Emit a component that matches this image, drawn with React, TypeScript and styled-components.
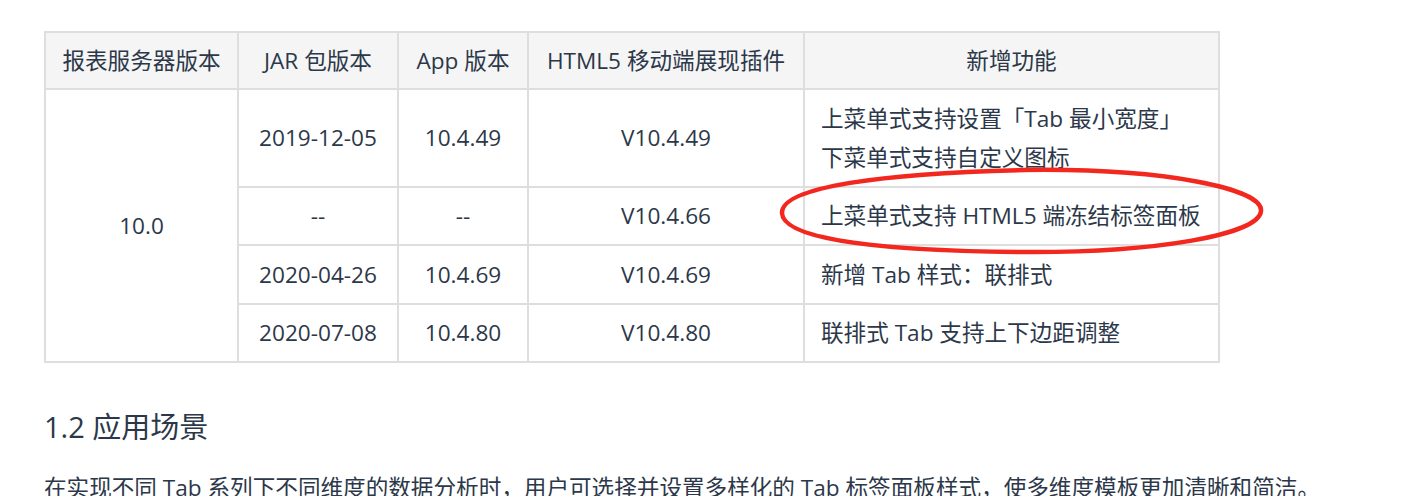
import React from "react"
import styled, { createGlobalStyle } from "styled-components"

const GlobalStyle = createGlobalStyle`
  html, body {
    margin: 0;
    padding: 0;
    background: #fff;
  }
  body {
    font-family: "Open Sans", "Noto Sans CJK SC", sans-serif;
    color: #2c3849;
  }
`

const Page = styled.div`
  padding: 31px 0 0 44px;
  width: 1368px;
  overflow: hidden;
`

const TableWrap = styled.div`
  position: relative;
  width: 1174px;
`

const Table = styled.table`
  border-collapse: collapse;
  table-layout: fixed;
  width: 1174px;
  font-size: 22.6px;
  line-height: 39px;
`

const HeadCell = styled.th`
  background: #f5f5f5;
  border: 2px solid #dedede;
  padding: 8px 10px;
  font-weight: 400;
  text-align: center;
  white-space: nowrap;
`

const Cell = styled.td<{ $left?: boolean }>`
  border: 2px solid #dedede;
  padding: 8.75px 16px;
  text-align: ${({ $left }) => ($left ? "left" : "center")};
  white-space: nowrap;
  vertical-align: middle;
`

const Highlight = styled.svg`
  position: absolute;
  left: 730px;
  top: 132px;
  overflow: visible;
  pointer-events: none;
`

const Heading = styled.h2`
  margin: 43px 0 0;
  font-size: 29px;
  line-height: 42px;
  font-weight: 400;
`

const Paragraph = styled.p`
  margin: 20px 0 0;
  font-size: 22.6px;
  line-height: 39px;
  white-space: nowrap;
`

const rows = [
  {
    jar: "2019-12-05",
    app: "10.4.49",
    h5: "V10.4.49",
    feature: ["上菜单式支持设置「Tab 最小宽度」", "下菜单式支持自定义图标"],
  },
  { jar: "--", app: "--", h5: "V10.4.66", feature: ["上菜单式支持 HTML5 端冻结标签面板"] },
  { jar: "2020-04-26", app: "10.4.69", h5: "V10.4.69", feature: ["新增 Tab 样式：联排式"] },
  { jar: "2020-07-08", app: "10.4.80", h5: "V10.4.80", feature: ["联排式 Tab 支持上下边距调整"] },
]

export default function App() {
  return (
    <>
      <GlobalStyle />
      <Page>
        <TableWrap>
          <Table>
            <colgroup>
              <col style={{ width: 193 }} />
              <col style={{ width: 160 }} />
              <col style={{ width: 130 }} />
              <col style={{ width: 276 }} />
              <col style={{ width: 415 }} />
            </colgroup>
            <thead>
              <tr>
                <HeadCell>报表服务器版本</HeadCell>
                <HeadCell>JAR 包版本</HeadCell>
                <HeadCell>App 版本</HeadCell>
                <HeadCell>HTML5 移动端展现插件</HeadCell>
                <HeadCell>新增功能</HeadCell>
              </tr>
            </thead>
            <tbody>
              {rows.map((r, i) => (
                <tr key={r.h5}>
                  {i === 0 && <Cell rowSpan={rows.length}>10.0</Cell>}
                  <Cell>{r.jar}</Cell>
                  <Cell>{r.app}</Cell>
                  <Cell>{r.h5}</Cell>
                  <Cell $left>
                    {r.feature.map((line) => (
                      <div key={line}>{line}</div>
                    ))}
                  </Cell>
                </tr>
              ))}
            </tbody>
          </Table>
          <Highlight width="500" height="100" viewBox="0 0 500 100">
            <path
              d="M 250 7 C 392 5 489 26 487 48 C 485 72 380 90 248 89 C 118 88 9 78 8 50 C 7 24 110 10 250 7 Z"
              fill="none"
              stroke="#f2281f"
              strokeWidth="4.5"
            />
          </Highlight>
        </TableWrap>
        <Heading>1.2 应用场景</Heading>
        <Paragraph>
          在实现不同 Tab 系列下不同维度的数据分析时，用户可选择并设置多样化的 Tab 标签面板样式，使多维度模板更加清晰和简洁。
        </Paragraph>
      </Page>
    </>
  )
}
